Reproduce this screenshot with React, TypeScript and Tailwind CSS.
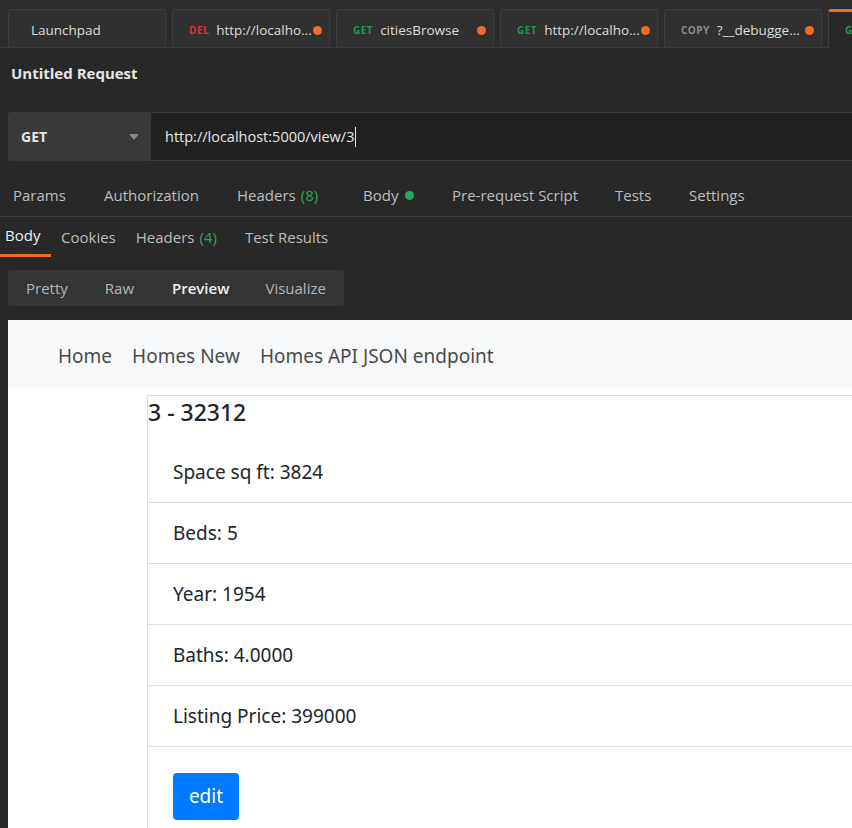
import React from "react";

type Tab = { method?: string; color?: string; label: string; dot?: boolean };

const TABS: Tab[] = [
  { label: "Launchpad" },
  { method: "DEL", color: "text-[#e0322e]", label: "http://localho...", dot: true },
  { method: "GET", color: "text-[#1f9c4f]", label: "citiesBrowse", dot: true },
  { method: "GET", color: "text-[#1f9c4f]", label: "http://localho...", dot: true },
  { method: "COPY", color: "text-[#8c8c8c]", label: "?__debugge...", dot: true },
];

const REQ_TABS = [
  { label: "Params", x: "w-[91px]" },
  { label: "Authorization", x: "w-[133px]" },
  { label: "Headers", count: "(8)", x: "w-[126px]" },
  { label: "Body", dot: true, x: "w-[89px]" },
  { label: "Pre-request Script", x: "w-[163px]" },
  { label: "Tests", x: "w-[74px]" },
  { label: "Settings", x: "w-[80px]" },
];

const ITEMS = [
  "Space sq ft: 3824",
  "Beds: 5",
  "Year: 1954",
  "Baths: 4.0000",
  "Listing Price: 399000",
];

export default function App() {
  return (
    <div className="h-[828px] w-[852px] overflow-hidden bg-[#282828] font-['Open_Sans',sans-serif] text-[#b4b4b4]">
      {/* open tabs */}
      <div className="flex h-[48px] items-end gap-[6px] border-b border-[#3b3b3b] bg-[#2c2c2c] pl-[8px]">
        {TABS.map((t, i) => (
          <div
            key={i}
            className={`flex h-[38px] w-[158px] shrink-0 items-center rounded-t-[3px] border border-b-0 border-[#3e3e3e] bg-[#303030] pt-[3px] ${
              t.method ? "pl-[16px] pr-[7px]" : "pl-[22px]"
            }`}
          >
            {t.method && (
              <span className={`mr-[7px] text-[10px] font-bold tracking-[0.5px] ${t.color}`}>
                {t.method}
              </span>
            )}
            <span className="flex-1 truncate whitespace-nowrap text-[13.5px] text-[#dcdcdc]">
              {t.label}
            </span>
            {t.dot && <span className="h-[9px] w-[9px] shrink-0 rounded-full bg-[#f26b21]" />}
          </div>
        ))}
        <div className="-mb-px flex h-[39px] w-[158px] shrink-0 items-center rounded-t-[3px] border-t-[3px] border-l border-[#f26b21] border-l-[#3e3e3e] bg-[#282828] pl-[16px] pt-[1px]">
          <span className="text-[10px] font-bold text-[#1f9c4f]">GE</span>
        </div>
      </div>

      {/* title */}
      <div className="flex h-[50px] items-center pl-[11px] text-[15px] font-bold text-[#e6e6e6]">
        Untitled Request
      </div>

      {/* url bar */}
      <div className="mt-[14px] flex h-[49px] pl-[8px]">
        <div className="flex w-[143px] items-center justify-between rounded-l-[3px] bg-[#393939] pl-[13px] pr-[12px]">
          <span className="text-[14px] font-bold text-[#e6e6e6]">GET</span>
          <svg width="10" height="6" viewBox="0 0 10 6">
            <path d="M0 0h10L5 6z" fill="#8a8a8a" />
          </svg>
        </div>
        <div className="flex flex-1 items-center border-y border-[#3b3b3b] bg-[#212121] pl-[14px] text-[14.5px] text-[#e6e6e6]">
          http://localhost:5000/view/3
          <span className="ml-px h-[20px] w-px bg-[#e6e6e6]" />
        </div>
      </div>

      {/* request tabs */}
      <div className="mt-[11px] flex h-[45px] items-center border-b border-[#3b3b3b] pl-[13px] pt-[3px] text-[15px] text-[#bdbdbd]">
        {REQ_TABS.map((t) => (
          <div key={t.label} className={`flex shrink-0 items-center ${t.x}`}>
            {t.label}
            {t.count && <span className="ml-[5px] text-[#26a85a]">{t.count}</span>}
            {t.dot && <span className="ml-[7px] h-[9px] w-[9px] rounded-full bg-[#26a85a]" />}
          </div>
        ))}
      </div>

      {/* response tabs */}
      <div className="flex h-[40px] items-stretch text-[15px] text-[#bdbdbd]">
        <div className="flex w-[51px] items-center border-b-[3px] border-[#f26b21] pl-[5px] text-[#f0f0f0]">
          Body
        </div>
        <div className="ml-[10px] flex items-center">Cookies</div>
        <div className="ml-[20px] flex items-center">
          Headers <span className="ml-[5px] text-[#26a85a]">(4)</span>
        </div>
        <div className="ml-[28px] flex items-center">Test Results</div>
      </div>

      {/* view modes */}
      <div className="ml-[8px] mt-[13px] flex h-[36px] w-[336px] items-center rounded-[3px] bg-[#353535] text-[15px] text-[#b4b4b4]">
        <span className="ml-[18px]">Pretty</span>
        <span className="ml-[37px]">Raw</span>
        <span className="ml-[38px] font-semibold text-[#f0f0f0]">Preview</span>
        <span className="ml-[36px]">Visualize</span>
      </div>

      {/* preview */}
      <div className="ml-[8px] mt-[14px] h-[600px] bg-white font-['Noto_Sans',sans-serif] text-[#212529]">
        <nav className="flex h-[69px] items-center gap-[20px] bg-[#f8f9fa] pl-[50px] pt-[4px] text-[19px] text-[#4a4a4a]">
          <span>Home</span>
          <span>Homes New</span>
          <span>Homes API JSON endpoint</span>
        </nav>
        <div className="ml-[139px] mt-[6px] border-l border-t border-[#dedede]">
          <div className="h-[46px] text-[23px] font-medium leading-[32px]">3 - 32312</div>
          {ITEMS.map((it) => (
            <div
              key={it}
              className="flex h-[61px] items-center border-b border-[#dedede] pl-[25px] text-[19px]"
            >
              {it}
            </div>
          ))}
          <div className="pl-[25px] pt-[26px]">
            <button className="h-[47px] w-[66px] rounded-[4px] bg-[#007bff] text-[19px] text-white">
              edit
            </button>
          </div>
          <div className="h-[40px]" />
        </div>
      </div>
    </div>
  );
}
